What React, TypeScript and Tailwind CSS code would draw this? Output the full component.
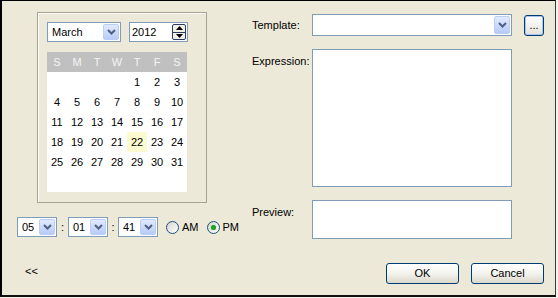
import React from 'react';

const days: (number | null)[][] = [
  [null, null, null, null, 1, 2, 3],
  [4, 5, 6, 7, 8, 9, 10],
  [11, 12, 13, 14, 15, 16, 17],
  [18, 19, 20, 21, 22, 23, 24],
  [25, 26, 27, 28, 29, 30, 31],
  [null, null, null, null, null, null, null],
];

function Chevron() {
  return (
    <svg width="9" height="6" viewBox="0 0 9 6">
      <path d="M1 1 L4.5 4.5 L8 1" stroke="#4d6185" strokeWidth="2" fill="none" />
    </svg>
  );
}

function DropButton() {
  return (
    <div className="w-[16px] self-stretch flex items-center justify-center rounded-[2px] border border-[#b9cdf6] bg-gradient-to-b from-[#e2eafe] to-[#b7cbf6]">
      <Chevron />
    </div>
  );
}

function Combo({ value, className }: { value: string; className: string }) {
  return (
    <div className={`flex items-stretch border border-[#7f9db9] bg-white p-px ${className}`}>
      <span className="flex-1 flex items-center pl-[3px] text-[11px] leading-none">{value}</span>
      <DropButton />
    </div>
  );
}

function Spinner() {
  return (
    <div className="w-[14px] self-stretch flex flex-col rounded-[2px] border border-[#2c3d5e] bg-[#f1efe6]">
      <div className="flex-1 flex items-center justify-center border-b border-[#2c3d5e]">
        <svg width="7" height="4" viewBox="0 0 7 4"><path d="M0 4 L3.5 0 L7 4 Z" fill="#000" /></svg>
      </div>
      <div className="flex-1 flex items-center justify-center">
        <svg width="7" height="4" viewBox="0 0 7 4"><path d="M0 0 L3.5 4 L7 0 Z" fill="#000" /></svg>
      </div>
    </div>
  );
}

function Radio({ checked, label }: { checked: boolean; label: string }) {
  return (
    <div className="flex items-center gap-[3px]">
      <div className="w-[13px] h-[13px] rounded-full border border-[#1c5180] bg-gradient-to-br from-[#d6d5cc] to-[#ffffff] flex items-center justify-center">
        {checked && <div className="w-[5px] h-[5px] rounded-full bg-[#21a121] shadow-[0_0_1px_#5fd35f]" />}
      </div>
      <span className="text-[11px] leading-none">{label}</span>
    </div>
  );
}

function XpButton({ label, className }: { label: string; className: string }) {
  return (
    <div className={`flex items-center justify-center rounded-[3px] border border-[#003c74] bg-gradient-to-b from-[#ffffff] via-[#f3f3ee] to-[#dcd8ca] text-[11px] leading-none ${className}`}>
      {label}
    </div>
  );
}

export default function App() {
  return (
    <div className="w-[558px] h-[298px] bg-[#f4f3ee] font-['Liberation_Sans',Arial,sans-serif] text-black">
      <div className="w-[556px] h-[297px] flex bg-[#ece9d8] border-l-2 border-t border-b-2 border-r border-l-black border-t-black border-b-[#111] border-r-[#3a3a3a]">
        {/* left: calendar + time */}
        <div className="w-[248px] flex flex-col">
          <div className="ml-[35px] mt-[11px] w-[170px] h-[191px] border border-[#a6a391] shadow-[inset_1px_1px_0_#ffffff] pl-[9px] pt-[9px]">
            <div className="flex gap-[8px] h-[20px]">
              <Combo value="March" className="w-[74px]" />
              <div className="w-[59px] flex items-stretch border border-[#7f9db9] bg-white p-px">
                <span className="flex-1 flex items-center pl-px text-[11px] leading-none">2012</span>
                <Spinner />
              </div>
            </div>
            <div className="mt-[10px] w-[140px] bg-white">
              <div className="grid grid-cols-7 h-[20px] bg-[#c0c0c0]">
                {['S', 'M', 'T', 'W', 'T', 'F', 'S'].map((d, i) => (
                  <div key={i} className="flex items-center justify-center text-[11px] text-[#f4f4f4]">{d}</div>
                ))}
              </div>
              {days.map((row, r) => (
                <div key={r} className="grid grid-cols-7 h-[20px]">
                  {row.map((d, c) => (
                    <div
                      key={c}
                      className={`flex items-center justify-center text-[11px] ${d === 22 ? 'bg-[#fbfbcf]' : ''}`}
                    >
                      {d ?? ''}
                    </div>
                  ))}
                </div>
              ))}
            </div>
          </div>

          <div className="ml-[15px] mt-[14px] h-[20px] flex items-center">
            <Combo value="05" className="w-[40px] h-[20px]" />
            <span className="w-[11px] text-center text-[11px]">:</span>
            <Combo value="01" className="w-[40px] h-[20px]" />
            <span className="w-[10px] text-center text-[11px]">:</span>
            <Combo value="41" className="w-[40px] h-[20px]" />
            <div className="ml-[8px] flex items-center gap-[8px]">
              <Radio checked={false} label="AM" />
              <Radio checked={true} label="PM" />
            </div>
          </div>

          <div className="ml-[23px] mt-[28px] text-[11px] leading-[13px]">&lt;&lt;</div>
        </div>

        {/* right: template form */}
        <div className="ml-[2px] w-[292px] flex flex-col text-[11px]">
          <div className="mt-[13px] flex items-center h-[22px]">
            <span className="w-[60px]">Template:</span>
            <Combo value="" className="w-[200px] h-[22px]" />
            <div className="ml-[12px] w-[20px] h-[21px] flex items-end justify-center pb-[4px] rounded-[3px] border border-[#003c74] shadow-[inset_0_0_0_1px_#a9c4f0] bg-gradient-to-b from-[#ffffff] to-[#e4e2d8] leading-none">
              ...
            </div>
          </div>

          <div className="mt-[13px] flex">
            <span className="w-[60px] pt-[6px] leading-[13px]">Expression:</span>
            <div className="w-[200px] h-[138px] border border-[#7f9db9] bg-white" />
          </div>

          <div className="mt-[13px] flex">
            <span className="w-[60px] pt-[6px] leading-[13px]">Preview:</span>
            <div className="w-[200px] h-[39px] border border-[#7f9db9] bg-white" />
          </div>

          <div className="mt-[24px] flex justify-end gap-[12px]">
            <XpButton label="OK" className="w-[73px] h-[21px]" />
            <XpButton label="Cancel" className="w-[73px] h-[21px]" />
          </div>
        </div>
      </div>
    </div>
  );
}
